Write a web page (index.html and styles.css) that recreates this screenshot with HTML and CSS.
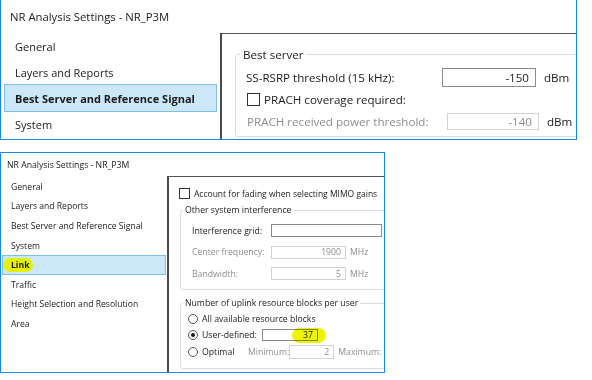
FILE: index.html
```html
<!DOCTYPE html>
<html lang="en">

<head>
    <meta charset="UTF-8">
    <title>NR Analysis Settings</title>
    <link rel="stylesheet" href="styles.css">
</head>

<body>
    <!-- upper dialog, zoomed in -->
    <div class="dialog large">
        <div class="title">NR Analysis Settings - NR_P3M</div>
        <div class="body">
            <ul class="nav">
                <li>General</li>
                <li>Layers and Reports</li>
                <li class="selected">Best Server and Reference Signal</li>
                <li>System</li>
            </ul>
            <div class="panel">
                <fieldset class="group">
                    <legend>Best server</legend>
                    <div class="row">
                        <span class="label">SS-RSRP threshold (15 kHz):</span>
                        <span class="field">-150</span>
                        <span class="unit">dBm</span>
                    </div>
                    <div class="row">
                        <span class="check"></span>
                        <span>PRACH coverage required:</span>
                    </div>
                    <div class="row off">
                        <span class="label indent">PRACH received power threshold:</span>
                        <span class="field narrow">-140</span>
                        <span class="unit on">dBm</span>
                    </div>
                </fieldset>
            </div>
        </div>
    </div>

    <!-- lower dialog, normal size -->
    <div class="dialog small">
        <div class="title">NR Analysis Settings - NR_P3M</div>
        <div class="body">
            <ul class="nav">
                <li>General</li>
                <li>Layers and Reports</li>
                <li>Best Server and Reference Signal</li>
                <li>System</li>
                <li class="selected"><span class="marker">Link</span></li>
                <li>Traffic</li>
                <li>Height Selection and Resolution</li>
                <li>Area</li>
            </ul>
            <div class="panel">
                <div class="row top-check">
                    <span class="check"></span>
                    <span>Account for fading when selecting MIMO gains</span>
                </div>
                <fieldset class="group">
                    <legend>Other system interference</legend>
                    <div class="row">
                        <span class="label">Interference grid:</span>
                        <span class="field wide"></span>
                    </div>
                    <div class="row off">
                        <span class="label">Center frequency:</span>
                        <span class="field">1900</span>
                        <span class="unit">MHz</span>
                    </div>
                    <div class="row off">
                        <span class="label">Bandwidth:</span>
                        <span class="field">5</span>
                        <span class="unit">MHz</span>
                    </div>
                </fieldset>
                <fieldset class="group blocks">
                    <legend>Number of uplink resource blocks per user</legend>
                    <div class="row">
                        <span class="radio"></span>
                        <span>All available resource blocks</span>
                    </div>
                    <div class="row">
                        <span class="radio checked"></span>
                        <span class="opt-label">User-defined:</span>
                        <span class="field user">37<span class="marker-over"></span></span>
                    </div>
                    <div class="row">
                        <span class="radio"></span>
                        <span class="opt-label short">Optimal</span>
                        <span class="off">Minimum:</span>
                        <span class="field min off">2</span>
                        <span class="off gap">Maximum:</span>
                    </div>
                </fieldset>
            </div>
        </div>
    </div>
</body>

</html>
```

FILE: styles.css
```css
* {
    box-sizing: border-box;
}

body {
    margin: 0;
    background: #fff;
    font-family: 'Open Sans', 'Noto Sans', Arial, sans-serif;
    color: #1b1b1b;
}

.dialog {
    border: 1px solid #1a86ea;
    background: #fff;
    overflow: hidden;
    display: flex;
    flex-direction: column;
}

.title {
    display: flex;
    align-items: center;
}

.body {
    flex: 1;
    display: flex;
    min-height: 0;
}

.nav {
    list-style: none;
    margin: 0;
    padding: 0;
    flex: none;
}

.nav li {
    border: 1px solid transparent;
    display: flex;
    align-items: center;
    white-space: nowrap;
}

.nav li.selected {
    background: #cce8f8;
    border-color: #7fbfe8;
}

.panel {
    flex: 1;
    border-left: 2px solid #4a4a4a;
    border-top: 1px solid #555;
    overflow: hidden;
}

.group {
    margin: 0;
    border: 1px solid #dcdcdc;
    border-radius: 3px;
    min-width: 0;
}

.row {
    display: flex;
    align-items: center;
    white-space: nowrap;
}

.label {
    flex: none;
}

.field {
    flex: none;
    display: flex;
    align-items: center;
    justify-content: flex-end;
    border: 1px solid #8c8c8c;
    background: #fff;
}

.off {
    color: #8e8e8e;
}

.off .field,
.field.off {
    border-color: #d2d2d2;
}

.unit.on {
    color: #1b1b1b;
}

.check {
    flex: none;
    border: 1px solid #333;
    background: #fff;
}

.radio {
    flex: none;
    border: 1px solid #555;
    border-radius: 50%;
    position: relative;
}

.radio.checked::after {
    content: "";
    position: absolute;
    left: 2px;
    top: 2px;
    right: 2px;
    bottom: 2px;
    border-radius: 50%;
    background: #1b1b1b;
}

/* upper dialog */
.large {
    width: 577px;
    height: 141px;
    margin-top: -1px;
    font-size: 11.6px;
}

.large .title {
    height: 33px;
    padding-left: 9px;
    padding-bottom: 1px;
    font-size: 11.3px;
}

.large .nav {
    width: 219px;
    font-size: 11px;
}

.large .nav li {
    height: 26px;
    margin: 0 3px;
    padding-left: 10px;
}

.large .nav li.selected {
    height: 28px;
    margin: -1px 3px;
    font-weight: bold;
}

.large .panel {
    padding: 12px 0 0 13px;
}

.large .group {
    width: calc(100% + 20px);
    padding: 3px 0 4px 10px;
}

.large legend {
    padding: 0 3px;
    margin-left: -6px;
    line-height: 17px;
}

.large .row {
    height: 22px;
}

.large .label {
    width: 196px;
}

.large .label.indent {
    width: 200px;
    margin-left: 1px;
}

.large .field {
    width: 94px;
    height: 19px;
    padding-right: 6px;
}

.large .field.narrow {
    width: 92px;
    height: 17px;
}

.large .unit {
    margin-left: 8px;
}

.large .check {
    width: 13px;
    height: 13px;
    margin: 0 4px 0 1px;
}

/* lower dialog */
.small {
    width: 385px;
    height: 221px;
    margin-top: 12px;
    font-size: 8.7px;
}

.small .title {
    height: 23px;
    padding-left: 6px;
}

.small .nav {
    width: 166px;
    padding-top: 1px;
    font-size: 8.6px;
}

.small .nav li {
    height: 19.6px;
    margin: 0 1px;
    padding-left: 8px;
}

.marker {
    background: #e4f200;
    border-radius: 8px;
    padding: 1px 4px 1px 8px;
    margin-left: -8px;
    font-weight: bold;
}

.small .panel {
    padding: 10px 0 0 10px;
}

.small .top-check {
    height: 12px;
    margin-bottom: 5px;
    font-size: 8.5px;
}

.small .check {
    width: 11px;
    height: 11px;
    margin-right: 4px;
}

.small .group {
    width: calc(100% + 20px);
    margin-left: 1px;
    padding: 3px 0 4px 11px;
}

.small legend {
    padding: 0 2px;
    margin-left: -9px;
    line-height: 13px;
}

.small .group .row {
    height: 21.5px;
}

.small .label {
    width: 79px;
}

.small .field {
    width: 75px;
    height: 13px;
    padding-right: 4px;
}

.small .field.wide {
    width: 111px;
}

.small .unit {
    margin-left: 4px;
}

.small .blocks {
    margin-top: 7px;
    padding: 1px 0 8px 7px;
}

.small .blocks legend {
    margin-left: -5px;
}

.small .blocks .row {
    height: 16.5px;
}

.small .radio {
    width: 10px;
    height: 10px;
    margin-right: 4px;
}

.opt-label {
    width: 60px;
}

.opt-label.short {
    width: 46px;
}

.small .field.user {
    width: 56px;
    height: 12px;
    position: relative;
    color: #1b1b1b;
}

.small .field.min {
    width: 45px;
    height: 14px;
}

.gap {
    margin-left: 4px;
}

/* highlighter stroke drawn over the value box */
.marker-over {
    position: absolute;
    left: 29px;
    top: -2px;
    width: 34px;
    height: 15px;
    border-radius: 8px;
    background: #eef500;
    mix-blend-mode: multiply;
}
```
